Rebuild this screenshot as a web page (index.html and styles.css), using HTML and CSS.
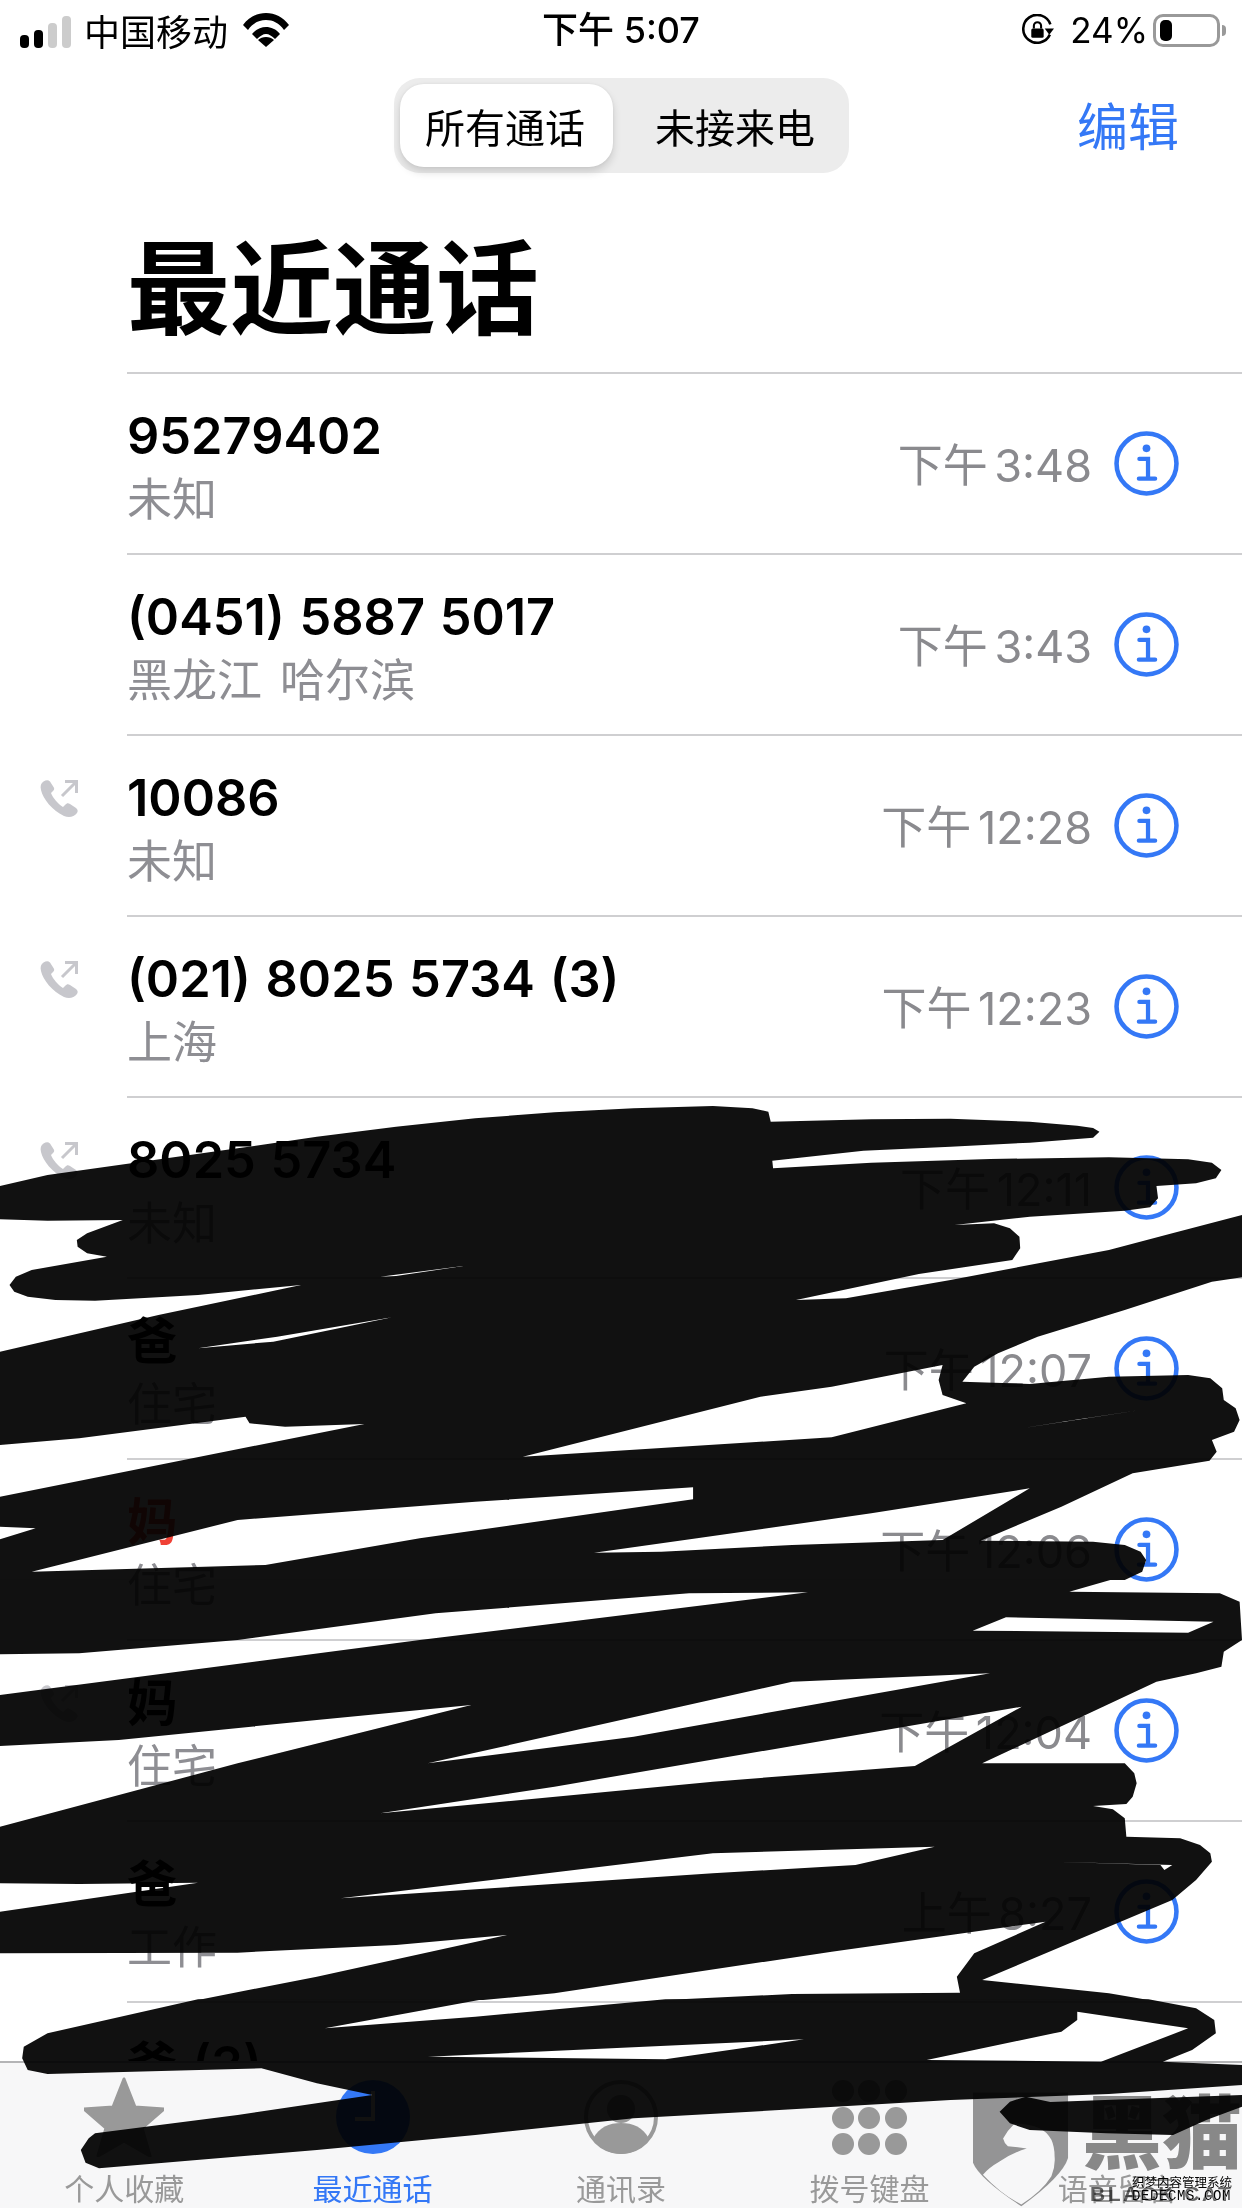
FILE: index.html
```html
<!DOCTYPE html>
<html lang="zh-CN">
<head>
    <meta charset="UTF-8">
    <meta name="viewport" content="width=device-width, initial-scale=1.0">
    <title>最近通话</title>
    <link rel="stylesheet" href="styles.css">
</head>
<body>
    <svg class="sprite" xmlns="http://www.w3.org/2000/svg">
        <symbol id="info" viewBox="0 0 64 64">
            <circle cx="32" cy="32" r="29.5" fill="none" stroke="currentColor" stroke-width="4.5"/>
            <circle cx="32" cy="17" r="3.8" fill="currentColor"/>
            <path d="M25 27.5h8.5v19M24.5 47h16" fill="none" stroke="currentColor" stroke-width="4.2" stroke-linecap="round"/>
        </symbol>
        <symbol id="outgoing" viewBox="0 0 40 40">
            <path d="M3.5 2.5C1 4 0 7 1 11c2 9 11 20 23 26 5 2 10 1 13-3 1-2 1-3-1-5l-6-4c-2-1-3-1-5 1l-2 2c-5-3-10-9-12-14l2-2c1.500-1.500 1.500-2.500.5-4L10 2.500C8 .5 6 1 3.500 2.500z" fill="currentColor"/>
            <path d="M22 17 36 3M25 2.500h11.500V14" fill="none" stroke="currentColor" stroke-width="3"/>
        </symbol>
    </svg>

    <div class="app">
        <div class="status-bar">
            <div class="status-left">
                <div class="signal">
                    <span class="bar bar-1"></span>
                    <span class="bar bar-2"></span>
                    <span class="bar bar-3"></span>
                    <span class="bar bar-4"></span>
                </div>
                <span class="carrier">中国移动</span>
                <svg class="wifi" viewBox="0 0 46 34">
                    <path d="M0 12C6 4 14 0 23 0s17 4 23 12l-5 5C36 10 30 7 23 7S10 10 5 17z"/>
                    <path d="M9 21c4-5 9-7 14-7s10 2 14 7l-5 5c-3-3-6-5-9-5s-6 2-9 5z"/>
                    <path d="M15 27c2-2 5-3 8-3s6 1 8 3l-8 7z"/>
                </svg>
            </div>
            <div class="status-time">下午 5:07</div>
            <div class="status-right">
                <svg class="rotation-lock" viewBox="0 0 32 32">
                    <path d="M27 20A13.500 13.500 0 1 1 27.500 10" fill="none" stroke="#000" stroke-width="2.500"/>
                    <path d="M22 14h9l-4.500 6z"/>
                    <rect x="9" y="14" width="12" height="9" rx="1.500"/>
                    <path d="M11.500 14v-2.500a3.500 3.500 0 0 1 7 0V14" fill="none" stroke="#000" stroke-width="2"/>
                </svg>
                <span class="battery-text">24%</span>
                <div class="battery"><span class="battery-level"></span></div>
                <span class="battery-nub"></span>
            </div>
        </div>

        <div class="nav">
            <div class="segments">
                <div class="segment segment-on">所有通话</div>
                <div class="segment">未接来电</div>
            </div>
            <a class="edit">编辑</a>
        </div>

        <h1 class="title">最近通话</h1>

        <div class="list">
            <div class="row">
                <div class="call-type"></div>
                <div class="row-body">
                    <div class="who"><div class="name">95279402</div><div class="sub">未知</div></div>
                    <div class="time">下午 3:48</div>
                    <svg class="info"><use href="#info"/></svg>
                </div>
            </div>
            <div class="row">
                <div class="call-type"></div>
                <div class="row-body">
                    <div class="who"><div class="name">(0451) 5887 5017</div><div class="sub">黑龙江 哈尔滨</div></div>
                    <div class="time">下午 3:43</div>
                    <svg class="info"><use href="#info"/></svg>
                </div>
            </div>
            <div class="row">
                <div class="call-type"><svg class="outgoing"><use href="#outgoing"/></svg></div>
                <div class="row-body">
                    <div class="who"><div class="name">10086</div><div class="sub">未知</div></div>
                    <div class="time">下午 12:28</div>
                    <svg class="info"><use href="#info"/></svg>
                </div>
            </div>
            <div class="row">
                <div class="call-type"><svg class="outgoing"><use href="#outgoing"/></svg></div>
                <div class="row-body">
                    <div class="who"><div class="name">(021) 8025 5734 (3)</div><div class="sub">上海</div></div>
                    <div class="time">下午 12:23</div>
                    <svg class="info"><use href="#info"/></svg>
                </div>
            </div>
            <div class="row">
                <div class="call-type"><svg class="outgoing"><use href="#outgoing"/></svg></div>
                <div class="row-body">
                    <div class="who"><div class="name">8025 5734</div><div class="sub">未知</div></div>
                    <div class="time">下午 12:11</div>
                    <svg class="info"><use href="#info"/></svg>
                </div>
            </div>
            <div class="row">
                <div class="call-type"></div>
                <div class="row-body">
                    <div class="who"><div class="name">爸</div><div class="sub">住宅</div></div>
                    <div class="time">下午 12:07</div>
                    <svg class="info"><use href="#info"/></svg>
                </div>
            </div>
            <div class="row">
                <div class="call-type"></div>
                <div class="row-body">
                    <div class="who"><div class="name missed">妈</div><div class="sub">住宅</div></div>
                    <div class="time">下午 12:06</div>
                    <svg class="info"><use href="#info"/></svg>
                </div>
            </div>
            <div class="row">
                <div class="call-type"><svg class="outgoing"><use href="#outgoing"/></svg></div>
                <div class="row-body">
                    <div class="who"><div class="name">妈</div><div class="sub">住宅</div></div>
                    <div class="time">下午 12:04</div>
                    <svg class="info"><use href="#info"/></svg>
                </div>
            </div>
            <div class="row">
                <div class="call-type"></div>
                <div class="row-body">
                    <div class="who"><div class="name">爸</div><div class="sub">工作</div></div>
                    <div class="time">上午 8:27</div>
                    <svg class="info"><use href="#info"/></svg>
                </div>
            </div>
            <div class="row">
                <div class="call-type"></div>
                <div class="row-body">
                    <div class="who"><div class="name">爸 (3)</div></div>
                </div>
            </div>
        </div>

        <div class="tabs">
            <div class="tab">
                <svg class="tab-icon" viewBox="0 0 80 80"><path d="M40 2 51 30 80 32 58 51 66 79 40 64 14 79 22 51 0 32 29 30z" fill="currentColor" stroke="currentColor" stroke-width="3" stroke-linejoin="round"/></svg>
                <span>个人收藏</span>
            </div>
            <div class="tab tab-on">
                <svg class="tab-icon" viewBox="0 0 80 80"><circle cx="40" cy="40" r="37" fill="currentColor"/><path d="M40 14v28H22" fill="none" stroke="#fff" stroke-width="4"/></svg>
                <span>最近通话</span>
            </div>
            <div class="tab">
                <svg class="tab-icon" viewBox="0 0 80 80"><circle cx="40" cy="40" r="35" fill="none" stroke="currentColor" stroke-width="4"/><circle cx="40" cy="32" r="14" fill="currentColor"/><path d="M12 62c6-12 16-16 28-16s22 4 28 16c-7 9-17 15-28 15S19 71 12 62z" fill="currentColor"/></svg>
                <span>通讯录</span>
            </div>
            <div class="tab">
                <svg class="tab-icon" viewBox="0 0 80 80">
                    <g fill="currentColor">
                        <circle cx="14" cy="14" r="11"/><circle cx="40" cy="14" r="11"/><circle cx="67" cy="14" r="11"/>
                        <circle cx="14" cy="41" r="11"/><circle cx="40" cy="41" r="11"/><circle cx="67" cy="41" r="11"/>
                        <circle cx="14" cy="67" r="11"/><circle cx="40" cy="67" r="11"/><circle cx="67" cy="67" r="11"/>
                    </g>
                </svg>
                <span>拨号键盘</span>
            </div>
            <div class="tab">
                <svg class="tab-icon" viewBox="0 0 80 80"></svg>
                <span>语音留言</span>
            </div>
        </div>

        <!-- watermark sits over the tab bar -->
        <div class="watermark">
            <svg class="wm-shield" viewBox="0 0 300 360">
                <path d="M0 0H297V205Q280 262 151 356 20 270 0 220Z" fill="#999"/>
                <path d="M130 97Q108 118 94 144 98 160 109 168L168 175Q120 190 83 216 50 235 31 257 90 320 151 350 215 310 245 262 258 230 255 200 255 170 245 148 230 122 208 112 175 98 130 97Z" fill="#fff"/>
            </svg>
            <div class="wm-name">黑猫</div>
            <div class="wm-en">BLACK CAT</div>
            <div class="wm-small">
                <div>织梦内容管理系统</div>
                <div class="wm-site">DEDECMS.COM</div>
            </div>
        </div>

        <!-- scribble, traced in three bands (x 1568 wide, y in 1/3 px) -->
        <svg class="scribble" viewBox="0 0 1568 6624" preserveAspectRatio="none">
            <g transform="translate(0,3240)">
                <path fill-rule="evenodd" d="M0 318L60 285 150 255 300 205 400 170 500 140 600 115 700 97 800 85 900 78 950 85 970 95 973 125
                    L1100 118 1200 116 1300 125 1360 137 1380 144 1388 155 1380 173 1300 188 1200 200 1090 212 975 242 976 265
                    L1100 248 1250 237 1400 232 1500 238 1530 248 1542 270 1535 295 1510 310 1460 318 1462 355 1452 382 1420 392 1300 410 1205 435 1255 430 1275 445 1287 470 1288 505 1278 540 1160 582 1005 660 1068 655 1200 600 1400 510 1480 460 1568 405
                    L1568 592 1530 605 1420 690 1310 770 1260 820 1230 860 1215 905 1300 912 1400 890 1500 885 1528 895 1543 925 1545 960 1560 985 1565 1020 1558 1055 1530 1080 1536 1115 1527 1142 1430 1180 1340 1280 1238 1382 1380 1385 1420 1395 1440 1415 1447 1440 1442 1475 1420 1500
                    L0 1500 0 1378 45 1345 0 1340 0 1250 460 1032 360 1040 315 1030 310 1010 100 1075 0 1095 0 815 200 705 380 615 250 645 120 662 70 660 35 650 18 635 12 615 20 590 40 570 135 530 110 520 98 500 97 480 110 460 155 420 60 422 0 418Z
                    M660 1130L960 950 1050 920 1190 855 1185 900 1190 945 1220 970 1050 1072Z
                    M875 1222L600 1265 300 1320 40 1475 335 1455 530 1375 875 1258Z
                    M750 1418L835 1415 1000 1395 1190 1380 1300 1225 1100 1300 880 1375Z
                    M585 558L480 590 500 588Z
                    M495 712L350 770 250 805 345 785Z
                    M1440 990L1290 1045 1350 1022Z"/>
            </g>
            <g transform="translate(0,4680)">
                <path fill-rule="evenodd" d="M0 58L1405 58 1350 95 1540 100 1565 125 1568 240 1545 275 1542 320 1510 340 1460 365 1240 610 1420 610 1432 640 1435 670 1430 710 1422 732 1380 738 1405 748 1420 775 1422 830 1490 835 1515 855 1528 880 1530 905 1510 960 1480 1020 1240 1260 1400 1300 1450 1320
                    L250 1320 400 1250 640 1125 500 1155 300 1178 0 1180 0 1055 250 968 100 972 0 970 0 800 300 610 595 435 400 480 150 540 0 558 0 405 530 240 1020 97 870 100 550 160 300 240 100 280 0 283Z
                    M1320 1085L1050 1175 700 1300 610 1320 840 1320 1000 1302 1212 1298 1208 1250 1230 1180Z
                    M1270 172L1532 185 1500 218 1228 212Z
                    M1000 365L1250 340 800 530 540 610Z
                    M1290 440L1155 618 900 665 480 760 700 680Z
                    M900 880L1180 860 1080 915 900 940 430 1015Z
                    M1330 905L1480 915 1470 930 1465 915Z"/>
            </g>
            <g transform="translate(0,6000)">
                <path fill-rule="evenodd" d="M250 -2L1450 -2 1510 25 1533 60 1535 100 1505 150 1468 185 1568 195 1568 255 1400 282 1200 300 1000 328 800 355 600 405 400 450 125 505 108 488 102 450 112 415 120 400 300 345 470 285 400 250 330 205 60 222 35 210 28 175 30 140 60 100Z
                    M610 -2L410 85 600 50 840 -2Z
                    M1360 35L1500 85 1390 185 1170 180 1340 95 1360 60Z
                    M540 170L1015 118 840 178Z"/>
                <path d="M1326 306L1568 285 1568 320 1523 360 1481 405 1397 400 1300 390 1275 370 1262 335 1275 305 1295 290Z"/>
            </g>
        </svg>
    </div>
</body>
</html>
```

FILE: styles.css
```css
html, body {
    margin: 0;
    padding: 0;
    background: #fff;
}
body {
    width: 1242px;
    height: 2208px;
    overflow: hidden;
    font-family: "Noto Sans CJK SC", "Noto Sans", sans-serif;
    color: #000;
}
.sprite {
    display: none;
}
.app {
    position: relative;
    display: flex;
    flex-direction: column;
    height: 2208px;
    background: #fff;
}

/* status bar */
.status-bar {
    display: grid;
    grid-template-columns: 1fr auto 1fr;
    align-items: center;
    height: 60px;
    flex: none;
}
.status-left {
    display: flex;
    align-items: center;
    padding-left: 20px;
}
.signal {
    display: flex;
    align-items: flex-end;
    gap: 5px;
    height: 32px;
    margin-top: 4px;
}
.bar {
    width: 9px;
    border-radius: 4px;
    background: #000;
}
.bar-1 { height: 13px; }
.bar-2 { height: 18px; }
.bar-3 { height: 25px; background: #ccc; }
.bar-4 { height: 32px; background: #ccc; }
.carrier {
    margin-left: 13px;
    font-size: 36px;
    line-height: 40px;
}
.wifi {
    width: 46px;
    height: 34px;
    margin-left: 15px;
    margin-top: -1px;
}
.status-time {
    font-size: 36px;
    line-height: 40px;
    font-family: "Inter", "Noto Sans CJK SC", sans-serif;
    font-weight: 500;
}
.status-right {
    display: flex;
    align-items: center;
    justify-content: flex-end;
    padding-right: 16px;
}
.rotation-lock {
    width: 33px;
    height: 33px;
}
.battery-text {
    margin-left: 15px;
    font-family: "Inter", sans-serif;
    font-size: 35px;
    line-height: 40px;
}
.battery {
    box-sizing: border-box;
    width: 67px;
    height: 33px;
    margin-left: 5px;
    padding: 3px 4px;
    border: 3px solid #999;
    border-radius: 10px;
}
.battery-level {
    display: block;
    width: 12px;
    height: 21px;
    border-radius: 5px;
    background: #000;
}
.battery-nub {
    width: 4px;
    height: 11px;
    margin-left: 2px;
    border-radius: 0 4px 4px 0;
    background: #999;
}

/* segmented control + edit */
.nav {
    position: relative;
    flex: none;
    display: flex;
    justify-content: center;
    padding-top: 18px;
}
.segments {
    box-sizing: border-box;
    display: flex;
    width: 455px;
    height: 95px;
    padding: 6px;
    border-radius: 26px;
    background: #ececec;
}
.segment {
    flex: 1;
    display: flex;
    align-items: center;
    justify-content: center;
    font-size: 40px;
    border-radius: 24px;
    padding-left: 15px;
}
.segment-on {
    flex: none;
    width: 213px;
    padding: 0 2px 0 0;
    box-sizing: border-box;
    background: #fff;
    box-shadow: 0 5px 8px rgba(0, 0, 0, 0.14), 0 0 3px rgba(0, 0, 0, 0.06);
}
.edit {
    position: absolute;
    right: 63px;
    top: 29px;
    font-size: 51px;
    line-height: 70px;
    color: #3478f6;
}

.title {
    flex: none;
    margin: 0 0 0 127px;
    padding: 55px 0 34px;
    font-size: 103px;
    line-height: 110px;
    font-weight: 700;
    border-bottom: 2px solid #cfcfd1;
}

/* call list */
.list {
    flex: 1;
    min-height: 0;
    overflow: hidden;
}
.row {
    display: grid;
    grid-template-columns: 127px 1fr;
    height: 181px;
}
.call-type {
    padding: 43px 0 0 40px;
}
.outgoing {
    display: block;
    width: 40px;
    height: 40px;
    color: #c7c7cc;
}
.row-body {
    display: flex;
    align-items: center;
    padding-right: 63px;
    border-bottom: 2px solid #cfcfd1;
}
.who {
    flex: 1;
    align-self: flex-start;
    padding-top: 32px;
}
.name {
    font-family: "Inter", "Noto Sans CJK SC", sans-serif;
    font-size: 50.500px;
    line-height: 60px;
    font-weight: 600;
    word-spacing: 2px;
}
.missed {
    color: #ef4135;
}
.sub {
    margin-top: 4px;
    font-size: 45px;
    line-height: 54px;
    word-spacing: 8px;
    color: #8e8e93;
}
.time {
    margin-bottom: 2px;
    font-family: "Inter", "Noto Sans CJK SC", sans-serif;
    font-size: 45px;
    word-spacing: -6px;
    color: #8a8a8e;
}
.info {
    width: 65px;
    height: 65px;
    margin-left: 22px;
    color: #3478f6;
}

/* tab bar */
.tabs {
    flex: none;
    box-sizing: border-box;
    display: grid;
    grid-template-columns: repeat(5, 1fr);
    height: 147px;
    padding-top: 14px;
    background: #f7f7f8;
    border-top: 2px solid #b4b4b6;
}
.tab {
    display: flex;
    flex-direction: column;
    align-items: center;
    color: #999;
    font-size: 30px;
    line-height: 36px;
}
.tab span {
    margin-top: 12px;
}
.tab-icon {
    width: 80px;
    height: 80px;
}
.tab-on {
    color: #3478f6;
}

/* watermark */
.watermark {
    position: absolute;
    left: 940px;
    top: 2060px;
    width: 302px;
    height: 148px;
    mix-blend-mode: multiply;
}
.wm-shield {
    position: absolute;
    left: 33px;
    top: 32px;
    width: 96px;
    height: 116px;
}
.wm-name {
    position: absolute;
    left: 142px;
    top: 22px;
    font-size: 80px;
    line-height: 90px;
    font-weight: 900;
    color: #8c8c8c;
}
.wm-en {
    position: absolute;
    left: 150px;
    top: 124px;
    font-family: "Liberation Sans", sans-serif;
    font-size: 21px;
    line-height: 20px;
    font-weight: 700;
    letter-spacing: 2.500px;
    color: #666;
}
.wm-small {
    position: absolute;
    right: 10px;
    top: 114px;
    font-size: 12.500px;
    line-height: 15px;
    color: #000;
    text-shadow: 0 0 1px #fff, 0 0 1px #fff;
}
.wm-site {
    font-family: "Liberation Mono", monospace;
    font-size: 14px;
    letter-spacing: .6px;
}

/* scribble over everything */
.scribble {
    position: absolute;
    left: 0;
    top: 0;
    width: 1242px;
    height: 2208px;
    fill: #111;
    mix-blend-mode: multiply;
}
```
